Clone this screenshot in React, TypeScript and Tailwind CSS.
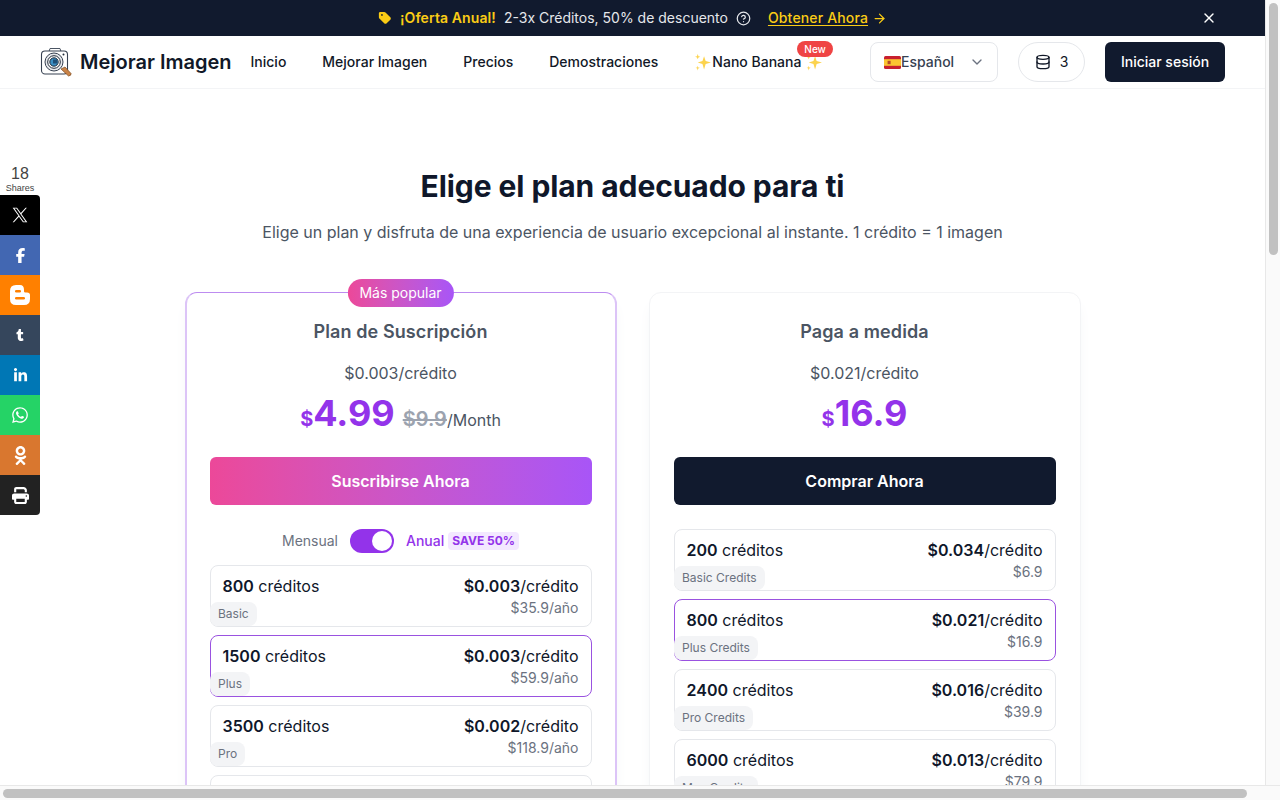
import { ArrowRight, ChevronDown, CircleHelp, Database, X } from "lucide-react";
import { FaFacebookF, FaLinkedinIn, FaOdnoklassniki, FaPrint, FaTag, FaTumblr, FaWhatsapp } from "react-icons/fa6";

const navLinks = ["Inicio", "Mejorar Imagen", "Precios", "Demostraciones"];

const XLogo = () => (
  <svg width="16" height="16" viewBox="0 0 24 24" fill="#ffffff">
    <path d="M14.095 10.316 22.286 1h-1.94L13.23 9.088 7.551 1H1l8.59 12.231L1 23h1.94l7.51-8.543L16.45 23H23l-8.905-12.684zm-2.658 3.022-.872-1.218L3.64 2.43h2.98l5.59 7.821.87 1.219 7.265 10.166h-2.982l-5.926-8.298z" />
  </svg>
);

const BloggerLogo = () => (
  <svg width="20" height="20" viewBox="0 0 20 20">
    <path d="M6 0 H10 Q14 0 14 5 V6.5 Q14 7.5 15.5 7.5 H17 Q20 7.5 20 10 V14 Q20 20 14 20 H6 Q0 20 0 14 V6 Q0 0 6 0 Z" fill="#ffffff" />
    <rect x="5" y="5" width="6" height="2.5" rx="1.25" fill="#ff8000" />
    <rect x="5" y="12" width="10" height="2.5" rx="1.25" fill="#ff8000" />
  </svg>
);

const shareButtons = [
  { icon: <XLogo />, className: "bg-black rounded-tr" },
  { icon: <FaFacebookF className="h-[15px] w-[15px]" />, className: "bg-[#4267b2]" },
  { icon: <BloggerLogo />, className: "bg-[#ff8000]" },
  { icon: <FaTumblr className="h-3 w-3" />, className: "bg-[#35465c]" },
  { icon: <FaLinkedinIn className="h-[15px] w-[15px]" />, className: "bg-[#0077b5]" },
  { icon: <FaWhatsapp className="h-[18px] w-[18px]" />, className: "bg-[#25d366]" },
  { icon: <FaOdnoklassniki className="h-[19px] w-[19px]" />, className: "bg-[#d9772f]" },
  { icon: <FaPrint className="h-[17px] w-[17px]" />, className: "bg-[#222222] rounded-br" },
];

const subscriptionRows = [
  { credits: "800", tag: "Basic", price: "$0.003", total: "$35.9/año" },
  { credits: "1500", tag: "Plus", price: "$0.003", total: "$59.9/año", active: true },
  { credits: "3500", tag: "Pro", price: "$0.002", total: "$118.9/año" },
  { credits: "7000", tag: "Max", price: "$0.002", total: "$199.9/año" },
];

const payAsYouGoRows = [
  { credits: "200", tag: "Basic Credits", price: "$0.034", total: "$6.9" },
  { credits: "800", tag: "Plus Credits", price: "$0.021", total: "$16.9", active: true },
  { credits: "2400", tag: "Pro Credits", price: "$0.016", total: "$39.9" },
  { credits: "6000", tag: "Max Credits", price: "$0.013", total: "$79.9" },
];

type Row = { credits: string; tag: string; price: string; total: string; active?: boolean };

const Logo = () => (
  <svg width="32" height="30" viewBox="0 0 32 30" fill="none">
    <path d="M9 4.5 L10 1.5 H20 L21 4.5" stroke="#4b5563" strokeWidth="1" fill="#ffffff" />
    <rect x="1.5" y="4" width="26" height="23" rx="3.5" fill="#ffffff" stroke="#374151" strokeWidth="1.1" />
    <circle cx="14" cy="15" r="9" fill="#e5e7eb" stroke="#374151" strokeWidth="1" />
    <circle cx="14" cy="15" r="6.3" fill="#ffffff" stroke="#1f2937" strokeWidth="1" />
    <circle cx="14" cy="15" r="4.2" fill="#3b8fc4" stroke="#1f2937" strokeWidth="1" />
    <rect x="13" y="12.5" width="4" height="4" fill="#1e4f78" />
    <circle cx="23.5" cy="7.5" r="1" fill="#1f2937" />
    <path d="M21 22 L25 20 L31 26.5 Q31.5 28.5 28.5 29 Z" fill="#c98347" stroke="#7c4a20" strokeWidth="0.7" />
  </svg>
);

const Sparkle = () => (
  <svg width="18" height="18" viewBox="0 0 17 17" fill="#fcd34d">
    <path d="M9.5 3 L11 7.5 L16 9 L11 10.5 L9.5 15.5 L8 10.5 L3.5 9 L8 7.5 Z" />
    <path d="M3.5 1 L4.2 3 L6 3.6 L4.2 4.3 L3.5 6 L2.8 4.3 L1 3.6 L2.8 3 Z" />
    <path d="M3.5 12 L4 13.6 L5.5 14 L4 14.6 L3.5 16.5 L3 14.6 L1.5 14 L3 13.6 Z" />
  </svg>
);

const SpainFlag = () => (
  <svg width="17" height="13" viewBox="0 0 17 13">
    <rect width="17" height="13" rx="1.5" fill="#c8202f" />
    <rect y="3.2" width="17" height="6.6" fill="#fbc531" />
    <rect x="3.6" y="4.8" width="3" height="3.4" fill="#b5482a" />
  </svg>
);

const Banner = () => (
  <div className="relative flex h-9 shrink-0 items-center justify-center bg-[#111a2e] text-sm">
    <FaTag className="h-[14px] w-[14px] text-[#facc15]" />
    <span className="ml-2 font-semibold tracking-[0.1px] text-[#facc15]">¡Oferta Anual!</span>
    <span className="ml-2 text-[#e5e7eb]">2-3x Créditos, 50% de descuento</span>
    <CircleHelp className="ml-2 h-[15px] w-[15px] text-[#e5e7eb]" />
    <span className="ml-[17px] font-medium tracking-[0.15px] text-[#facc15] underline underline-offset-2">
      Obtener Ahora
    </span>
    <ArrowRight className="ml-1 h-[15px] w-[15px] text-[#facc15]" />
    <X className="absolute left-[1201px] top-[10px] h-4 w-4 text-white" />
  </div>
);

const Navbar = () => (
  <nav className="flex h-[53px] shrink-0 items-center border-b border-[#f3f4f6] bg-white pl-10 pr-10">
    <div className="flex items-center">
      <Logo />
      <span className="ml-2 text-xl font-semibold text-[#111827]">Mejorar Imagen</span>
    </div>
    <div className="ml-[19px] flex items-center gap-9 text-sm font-medium text-[#111827]">
      {navLinks.map((link) => (
        <span key={link}>{link}</span>
      ))}
      <div className="relative flex items-center">
        <Sparkle />
        <span>Nano Banana</span>
        <span className="ml-1">
          <Sparkle />
        </span>
        <span className="absolute -top-[11px] left-[103px] rounded-full bg-[#ef4444] px-[7px] py-[1px] text-[10px] leading-[14px] text-white">
          New
        </span>
      </div>
    </div>
    <div className="ml-auto flex items-center gap-5">
      <div className="flex h-10 w-[128px] items-center rounded-lg border border-[#e5e7eb] pl-[13px] pr-3 text-sm font-medium text-[#374151]">
        <SpainFlag />
        <span>Español</span>
        <ChevronDown className="ml-auto h-4 w-4 text-[#6b7280]" />
      </div>
      <div className="flex h-10 w-[67px] items-center justify-center gap-[9px] rounded-full border border-[#e5e7eb] text-sm text-[#111827]">
        <Database className="h-4 w-4" />
        <span>3</span>
      </div>
      <button className="h-10 w-[120px] rounded-md bg-[#111a2e] text-sm font-medium text-white">Iniciar sesión</button>
    </div>
  </nav>
);

const CreditRow = ({ row }: { row: Row }) => (
  <div
    className={`relative flex h-[62px] shrink-0 justify-between rounded-lg border bg-white px-3 pt-2 ${
      row.active ? "border-[#9a52e0]" : "border-[#e5e7eb]"
    }`}
  >
    <div className="text-base leading-6 text-[#0f172a]">
      <span className="font-semibold">{row.credits}</span> créditos
    </div>
    <div className="text-right">
      <div className="text-base leading-6 text-[#0f172a]">
        <span className="font-semibold">{row.price}</span>/crédito
      </div>
      <div className="text-sm leading-5 text-[#6b7280]">{row.total}</div>
    </div>
    <span className="absolute -left-[0.5px] bottom-0 rounded-lg bg-[#f3f4f6] px-2 py-[3px] text-xs leading-[18px] text-[#6b7280]">
      {row.tag}
    </span>
  </div>
);

const Pricing = () => (
  <main className="flex min-h-0 flex-1 flex-col items-center overflow-hidden bg-white pt-[79px]">
    <h1 className="text-[30px] font-bold leading-9 tracking-[-0.08px] text-[#0f172a]">Elige el plan adecuado para ti</h1>
    <p className="mt-4 text-base leading-6 text-[#4b5563]">
      Elige un plan y disfruta de una experiencia de usuario excepcional al instante. 1 crédito = 1 imagen
    </p>
    <div className="mt-12 grid w-[896px] grid-cols-2 gap-8">
      <section className="relative h-[600px] rounded-xl border border-[#bd8cf0] border-x-2 border-x-[#dcc4f7] bg-white px-[23px] pt-[25px] shadow-lg shadow-gray-100">
        <span className="absolute -top-[14px] left-1/2 -translate-x-1/2 rounded-full bg-gradient-to-r from-[#ec4899] to-[#a855f7] px-3 py-1 text-sm leading-5 text-white">
          Más popular
        </span>
        <h2 className="text-center text-lg font-semibold leading-7 tracking-[0.1px] text-[#4b5563]">Plan de Suscripción</h2>
        <p className="mt-[15px] text-center text-base leading-6 text-[#4b5563]">$0.003/crédito</p>
        <div className="mt-2 flex h-10 items-baseline justify-center">
          <span className="text-xl font-bold text-[#9333ea]">$</span>
          <span className="text-4xl font-bold text-[#9333ea]">4.99</span>
          <span className="ml-2 text-xl font-semibold text-[#9ca3af] line-through">$9.9</span>
          <span className="text-base text-[#4b5563]">/Month</span>
        </div>
        <button className="mt-6 h-12 w-full rounded-md bg-gradient-to-r from-[#ec4899] to-[#a855f7] text-base font-semibold text-white">
          Suscribirse Ahora
        </button>
        <div className="mt-6 flex h-6 items-center justify-center text-sm">
          <span className="text-[#6b7280]">Mensual</span>
          <span className="ml-3 flex h-6 w-11 items-center justify-end rounded-full bg-[#9333ea] pr-[2px]">
            <span className="h-5 w-5 rounded-full bg-white" />
          </span>
          <span className="ml-3 font-medium text-[#9333ea]">Anual</span>
          <span className="ml-1 rounded bg-[#f3e8ff] px-1 text-xs font-bold leading-[18px] text-[#9333ea]">
            SAVE 50%
          </span>
        </div>
        <div className="mt-3 flex flex-col gap-2">
          {subscriptionRows.map((row) => (
            <CreditRow key={row.credits} row={row} />
          ))}
        </div>
      </section>
      <section className="relative h-[600px] rounded-xl border border-[#f3f4f6] bg-white px-6 pt-[25px] shadow-lg shadow-gray-100">
        <h2 className="text-center text-lg font-semibold leading-7 tracking-[0.1px] text-[#4b5563]">Paga a medida</h2>
        <p className="mt-[15px] text-center text-base leading-6 text-[#4b5563]">$0.021/crédito</p>
        <div className="mt-2 flex h-10 items-baseline justify-center">
          <span className="text-xl font-bold text-[#9333ea]">$</span>
          <span className="text-4xl font-bold text-[#9333ea]">16.9</span>
        </div>
        <button className="mt-6 h-12 w-full rounded-md bg-[#111a2e] text-base font-semibold text-white">
          Comprar Ahora
        </button>
        <div className="mt-6 flex flex-col gap-2">
          {payAsYouGoRows.map((row) => (
            <CreditRow key={row.credits} row={row} />
          ))}
        </div>
      </section>
    </div>
  </main>
);

const ShareBar = () => (
  <div className="absolute left-0 top-[166px] w-10 font-['Liberation_Sans',sans-serif]">
    <div className="text-center text-[#444444]">
      <div className="text-base leading-4">18</div>
      <div className="text-[9px] leading-[13px]">Shares</div>
    </div>
    {shareButtons.map((button, i) => (
      <div key={i} className={`flex h-10 w-10 items-center justify-center text-white ${button.className}`}>
        {button.icon}
      </div>
    ))}
  </div>
);

export default function App() {
  return (
    <div className="relative flex h-[800px] w-[1280px] flex-col overflow-hidden bg-white font-['Inter',sans-serif]">
      <div className="flex min-h-0 flex-1">
        <div className="flex min-w-0 flex-1 flex-col">
          <Banner />
          <Navbar />
          <Pricing />
        </div>
        {/* fake vertical scrollbar */}
        <div className="w-[15px] shrink-0 border-l border-[#e8e8e8] bg-[#fafafa] pl-[3px] pt-[3px]">
          <div className="h-[252px] w-[9px] rounded-full bg-[#c1c1c1]" />
        </div>
      </div>
      {/* fake horizontal scrollbar */}
      <div className="h-[15px] shrink-0 border-t border-[#e8e8e8] bg-[#fafafa] pl-[3px] pt-[3px]">
        <div className="h-[9px] w-[1244px] rounded-full bg-[#c1c1c1]" />
      </div>
      <ShareBar />
    </div>
  );
}
